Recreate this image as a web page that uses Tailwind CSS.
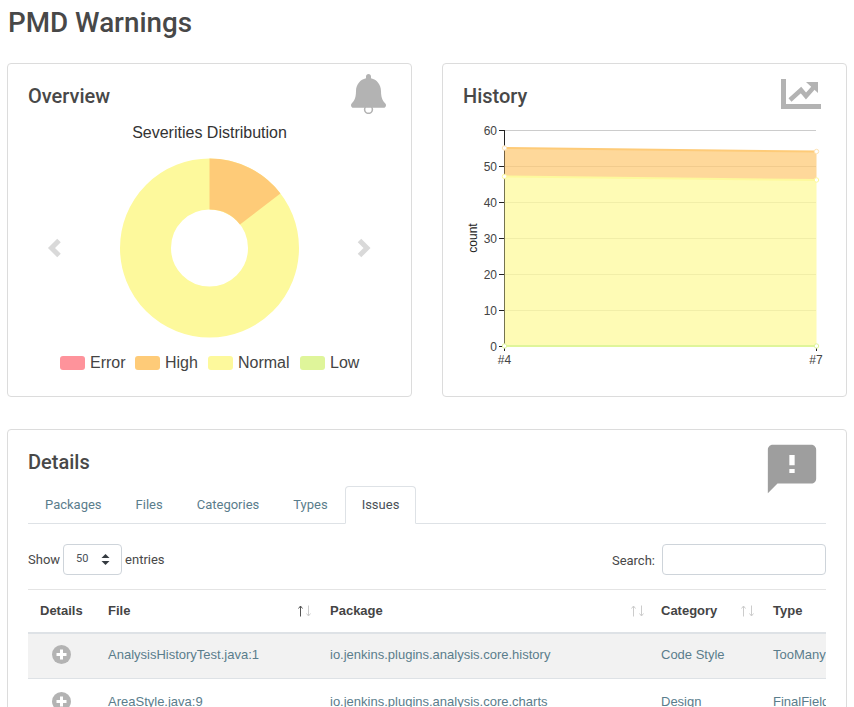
<!DOCTYPE html>
<html lang="en">
<head>
  <meta charset="UTF-8">
  <title>PMD Warnings</title>
  <script src="https://cdn.jsdelivr.net/npm/@tailwindcss/browser@4"></script>
</head>
<body class="h-[707px] overflow-hidden bg-white px-[7px] font-['Roboto',sans-serif] text-[#484848]">
  <h1 class="h-[63px] pl-px pt-[5px] text-[27.8px] font-medium leading-9 text-[#484848]">PMD Warnings</h1>

  <div class="grid w-[840px] grid-cols-[405px_405px] gap-[30px]">
    <!-- overview -->
    <div class="h-[334px] rounded border border-[#dcdcdc]">
      <div class="flex h-[56px] items-start justify-between pl-5 pr-[25px] pt-5">
        <h2 class="text-xl font-medium leading-6 text-[#484848]">Overview</h2>
        <svg class="-mt-[10px] h-[40px] w-[35px] fill-[#b3b3b3]" viewBox="0 0 448 512">
          <circle cx="224" cy="454" r="50" fill="#fff" stroke="#b3b3b3" stroke-width="20"/>
          <path transform="scale(1 1.04)" d="M439.39 362.29c-19.32-20.76-55.47-51.99-55.47-154.29 0-77.7-54.48-139.9-127.94-155.16V32c0-17.67-14.32-32-31.98-32s-31.98 14.33-31.98 32v20.84C118.56 68.1 64.08 130.3 64.08 208c0 102.3-36.15 133.53-55.47 154.29-6 6.45-8.66 14.16-8.61 21.71.11 16.4 12.98 32 32.1 32h383.8c19.12 0 32-15.6 32.1-32 .05-7.55-2.61-15.27-8.61-21.71z"/>
        </svg>
      </div>
      <svg class="block font-['Liberation_Sans',sans-serif]" width="403" height="276" viewBox="8 120 403 276">
        <text x="209.5" y="138" text-anchor="middle" font-size="16" fill="#333">Severities Distribution</text>
        <circle cx="209.5" cy="248" r="64" fill="none" stroke="#fdf99c" stroke-width="51"/>
        <path d="M209.5 158.5A89.5 89.5 0 0 1 280.4 193.4L240 224.5A38.5 38.5 0 0 0 209.5 209.5Z" fill="#fecb78"/>
        <polyline points="59,240.5 51.5,248 59,255.5" fill="none" stroke="#d9d9d9" stroke-width="5"/>
        <polyline points="359.5,240.5 367,248 359.5,255.5" fill="none" stroke="#d9d9d9" stroke-width="5"/>
        <rect x="60" y="356" width="25" height="14" rx="3" fill="#fe939b"/>
        <text x="90" y="368" font-size="16" fill="#444">Error</text>
        <rect x="135" y="356" width="25" height="14" rx="3" fill="#fecb78"/>
        <text x="165" y="368" font-size="16" fill="#444">High</text>
        <rect x="208" y="356" width="25" height="14" rx="3" fill="#fdf99c"/>
        <text x="238" y="368" font-size="16" fill="#444">Normal</text>
        <rect x="300" y="356" width="25" height="14" rx="3" fill="#dff59a"/>
        <text x="330" y="368" font-size="16" fill="#444">Low</text>
      </svg>
    </div>

    <!-- history -->
    <div class="h-[334px] rounded border border-[#dcdcdc]">
      <div class="flex h-[56px] items-start justify-between pl-5 pr-[25px] pt-5">
        <h2 class="text-xl font-medium leading-6 text-[#484848]">History</h2>
        <svg class="-mt-[5px] h-[30px] w-[40px] fill-[#b3b3b3]" viewBox="0 0 40 30">
          <path d="M0 0h5v25h35v5H0z"/>
          <path d="M25 3h12v11z"/>
          <polyline points="9,21 20,11 25,17 33,8" fill="none" stroke="#b3b3b3" stroke-width="4.5"/>
        </svg>
      </div>
      <svg class="block font-['Liberation_Sans',sans-serif]" width="403" height="276" viewBox="443 120 403 276" font-size="12" fill="#444">
        <g stroke="#ccc" stroke-width="1">
          <line x1="504" x2="816" y1="130.5" y2="130.5"/>
          <line x1="504" x2="816" y1="166.5" y2="166.5"/>
          <line x1="504" x2="816" y1="202.5" y2="202.5"/>
          <line x1="504" x2="816" y1="238.5" y2="238.5"/>
          <line x1="504" x2="816" y1="274.5" y2="274.5"/>
          <line x1="504" x2="816" y1="310.5" y2="310.5"/>
        </g>
        <g stroke="#222" stroke-width="1">
          <line x1="504.5" x2="504.5" y1="130" y2="346"/>
          <line x1="499" x2="504" y1="130.5" y2="130.5"/>
          <line x1="499" x2="504" y1="166.5" y2="166.5"/>
          <line x1="499" x2="504" y1="202.5" y2="202.5"/>
          <line x1="499" x2="504" y1="238.5" y2="238.5"/>
          <line x1="499" x2="504" y1="274.5" y2="274.5"/>
          <line x1="499" x2="504" y1="310.5" y2="310.5"/>
          <line x1="499" x2="504" y1="346.5" y2="346.5"/>
          <line x1="504.5" x2="504.5" y1="346" y2="351"/>
          <line x1="816.5" x2="816.5" y1="346" y2="351"/>
        </g>
        <path d="M504.5 148L816.5 151.5V180L504.5 176.5Z" fill="#fecb78" fill-opacity="0.75"/>
        <path d="M504.5 176.5L816.5 180V346H504.5Z" fill="#fdf99c" fill-opacity="0.75"/>
        <polyline points="504.5,148 816.5,151.5" fill="none" stroke="#fecb78" stroke-width="2"/>
        <polyline points="504.5,176.5 816.5,180" fill="none" stroke="#fdf99c" stroke-width="2"/>
        <line x1="504.5" x2="816.5" y1="346" y2="346" stroke="#dff59a" stroke-width="2"/>
        <g fill="#fff" stroke-width="1">
          <circle cx="504.5" cy="148" r="2.2" stroke="#fee3b4"/>
          <circle cx="816.5" cy="151.5" r="2.2" stroke="#fee3b4"/>
          <circle cx="504.5" cy="176.5" r="2.2" stroke="#fdf99c"/>
          <circle cx="816.5" cy="180" r="2.2" stroke="#fdf99c"/>
          <circle cx="504.5" cy="346" r="2.2" stroke="#dff59a"/>
          <circle cx="816.5" cy="346" r="2.2" stroke="#dff59a"/>
        </g>
        <g text-anchor="end">
          <text x="497" y="134.5">60</text>
          <text x="497" y="170.5">50</text>
          <text x="497" y="206.5">40</text>
          <text x="497" y="242.5">30</text>
          <text x="497" y="278.5">20</text>
          <text x="497" y="314.5">10</text>
          <text x="497" y="350.5">0</text>
        </g>
        <text x="504.5" y="364" text-anchor="middle">#4</text>
        <text x="816" y="364" text-anchor="middle">#7</text>
        <text transform="translate(477 238) rotate(-90)" text-anchor="middle" fill="#222">count</text>
      </svg>
    </div>
  </div>

  <!-- details -->
  <div class="mt-8 w-[840px] rounded border border-[#dcdcdc] px-5 pt-5">
    <div class="flex h-9 items-start justify-between">
      <h2 class="text-xl font-medium leading-6 text-[#484848]">Details</h2>
      <svg class="mr-[5px] -mt-[10px] h-[58px] w-[58px] fill-[#9e9e9e]" viewBox="0 0 24 24">
        <path d="M20 2H4c-1.1 0-1.99.9-1.99 2L2 22l4-4h14c1.1 0 2-.9 2-2V4c0-1.1-.9-2-2-2zM13.1 10.4h-2.2V6.2h2.2zM13.1 13.7h-2.2V12h2.2z"/>
      </svg>
    </div>

    <div class="flex h-[38px] border-b border-[#dee2e6] text-[13px] leading-5 text-[#5a7d8c]">
      <a class="border border-transparent px-4 py-[8px]">Packages</a>
      <a class="border border-transparent px-4 py-[8px]">Files</a>
      <a class="border border-transparent px-4 py-[8px]">Categories</a>
      <a class="border border-transparent px-4 py-[8px]">Types</a>
      <a class="h-[38px] rounded-t border border-[#dee2e6] border-b-white bg-white px-4 py-[8px] text-[#495057]">Issues</a>
    </div>

    <div class="mt-5 flex h-[31px] items-center justify-between text-[13px] text-[#484848]">
      <div class="flex items-center gap-[3px]">
        <span>Show</span>
        <div class="flex h-[31px] w-[59px] items-center justify-between rounded border border-[#ced4da] pl-[12px] pr-[11px] text-[11px] text-[#495057]">
          <span>50</span>
          <svg class="h-[11px] w-[9px] fill-[#343a40]" viewBox="0 0 9 11"><path d="M4.5 0L8.5 4H.5zM4.5 11L.5 7h8z"/></svg>
        </div>
        <span>entries</span>
      </div>
      <div class="flex items-center gap-[7px]">
        <span class="pt-[2px]">Search:</span>
        <div class="h-[31px] w-[164px] rounded border border-[#ced4da]"></div>
      </div>
    </div>

    <div class="mt-[14px] w-[798px] overflow-hidden">
      <table class="w-[880px] table-fixed font-['Liberation_Sans',sans-serif] text-[13px]">
        <colgroup>
          <col class="w-[68px]">
          <col class="w-[222px]">
          <col class="w-[331px]">
          <col class="w-[112px]">
          <col class="w-[147px]">
        </colgroup>
        <thead class="text-[#444]">
          <tr class="h-[43px] border-y-2 border-t-1 border-b-[#dee2e6] border-t-[#e4e4e4]">
            <th class="px-3 text-left font-bold">Details</th>
            <th class="px-3 font-bold">
              <div class="flex items-center justify-between -mr-[5px]">
                <span>File</span>
                <svg class="h-[12px] w-[13px]" viewBox="0 0 13 12" fill="none" stroke-width="1"><path stroke="#555" d="M2.5 11.5V1M.5 3.5l2-2.5 2 2.5"/><path stroke="#ccc" d="M10.5 .5V11M8.5 8.5l2 2.5 2-2.5"/></svg>
              </div>
            </th>
            <th class="px-3 font-bold">
              <div class="flex items-center justify-between -mr-[7px]">
                <span>Package</span>
                <svg class="h-[12px] w-[13px]" viewBox="0 0 13 12" fill="none" stroke="#ccc" stroke-width="1"><path d="M2.5 11.5V1M.5 3.5l2-2.5 2 2.5"/><path d="M10.5 .5V11M8.5 8.5l2 2.5 2-2.5"/></svg>
              </div>
            </th>
            <th class="px-3 font-bold">
              <div class="flex items-center justify-between -mr-[5px]">
                <span>Category</span>
                <svg class="h-[12px] w-[13px]" viewBox="0 0 13 12" fill="none" stroke="#ccc" stroke-width="1"><path d="M2.5 11.5V1M.5 3.5l2-2.5 2 2.5"/><path d="M10.5 .5V11M8.5 8.5l2 2.5 2-2.5"/></svg>
              </div>
            </th>
            <th class="px-3 text-left font-bold">Type</th>
          </tr>
        </thead>
        <tbody class="text-[#5a7d8c]">
          <tr class="h-[46px] border-b border-[#dee2e6] bg-[#f2f2f2]">
            <td class="px-3 pb-[2px]">
              <svg class="ml-3 h-[19px] w-[19px]" viewBox="0 0 19 19"><circle cx="9.5" cy="9.5" r="9.5" fill="#b3b3b3"/><path d="M4.5 9.5h10M9.5 4.5v10" stroke="#fff" stroke-width="3"/></svg>
            </td>
            <td class="px-3 pb-[2px] whitespace-nowrap">AnalysisHistoryTest.java:1</td>
            <td class="px-3 pb-[2px] whitespace-nowrap">io.jenkins.plugins.analysis.core.history</td>
            <td class="px-3 pb-[2px] whitespace-nowrap">Code Style</td>
            <td class="px-3 pb-[2px] whitespace-nowrap">TooManyStaticImports</td>
          </tr>
          <tr class="h-[46px] border-b border-[#dee2e6]">
            <td class="px-3">
              <svg class="ml-3 h-[19px] w-[19px]" viewBox="0 0 19 19"><circle cx="9.5" cy="9.5" r="9.5" fill="#b3b3b3"/><path d="M4.5 9.5h10M9.5 4.5v10" stroke="#fff" stroke-width="3"/></svg>
            </td>
            <td class="px-3 whitespace-nowrap">AreaStyle.java:9</td>
            <td class="px-3 whitespace-nowrap">io.jenkins.plugins.analysis.core.charts</td>
            <td class="px-3 whitespace-nowrap">Design</td>
            <td class="px-3 whitespace-nowrap">FinalFieldCouldBeStatic</td>
          </tr>
        </tbody>
      </table>
    </div>
  </div>
</body>
</html>
